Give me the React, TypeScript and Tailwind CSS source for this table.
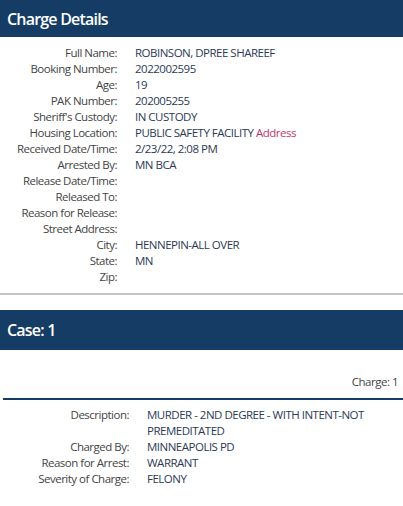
const rows: [string, string][] = [
  ["Full Name:", "ROBINSON, DPREE SHAREEF"],
  ["Booking Number:", "2022002595"],
  ["Age:", "19"],
  ["PAK Number:", "202005255"],
  ["Sheriff's Custody:", "IN CUSTODY"],
  ["Housing Location:", "PUBLIC SAFETY FACILITY"],
  ["Received Date/Time:", "2/23/22, 2:08 PM"],
  ["Arrested By:", "MN BCA"],
  ["Release Date/Time:", ""],
  ["Released To:", ""],
  ["Reason for Release:", ""],
  ["Street Address:", ""],
  ["City:", "HENNEPIN-ALL OVER"],
  ["State:", "MN"],
  ["Zip:", ""],
];

const charge: [string, string][] = [
  ["Description:", "MURDER - 2ND DEGREE - WITH INTENT-NOT PREMEDITATED"],
  ["Charged By:", "MINNEAPOLIS PD"],
  ["Reason for Arrest:", "WARRANT"],
  ["Severity of Charge:", "FELONY"],
];

export default function App() {
  return (
    <div
      className="w-[403px] h-[506px] overflow-hidden bg-white text-[11.5px] leading-[16px] tracking-[-0.5px] text-[#333]"
      style={{ fontFamily: '"Open Sans", Roboto, sans-serif' }}
    >
      <div className="h-[37px] bg-[#143c64] flex items-center px-[7px]">
        <h1 className="text-white text-[16px] font-semibold tracking-[-0.8px]">Charge Details</h1>
      </div>

      <div className="pt-[8px] pb-[8px] border-b-2 border-[#c4c4c4]">
        {rows.map(([k, v]) => (
          <div key={k} className="flex h-[16px]">
            <div className="w-[117px] shrink-0 text-right text-[#444]">{k}</div>
            <div className="pl-[18px] text-[#2c3a55]">
              {v}
              {k === "Housing Location:" && <span className="text-[#c2356b]"> Address</span>}
            </div>
          </div>
        ))}
      </div>

      <div className="mt-[15px] h-[40px] bg-[#143c64] flex items-center px-[7px]">
        <h2 className="text-white text-[16px] font-semibold tracking-[-0.8px]">Case: 1</h2>
      </div>

      <div className="pt-[24px] px-[5px] text-right text-[#444]">Charge: 1</div>
      <div className="mt-[8px] ml-[3px] border-t-2 border-[#143c64]" />

      <div className="pt-[7px]">
        {charge.map(([k, v]) => (
          <div key={k} className="flex">
            <div className="w-[129px] shrink-0 text-right text-[#444]">{k}</div>
            <div className="pl-[18px] w-[235px] text-[#2c3a55]">{v}</div>
          </div>
        ))}
      </div>
    </div>
  );
}
